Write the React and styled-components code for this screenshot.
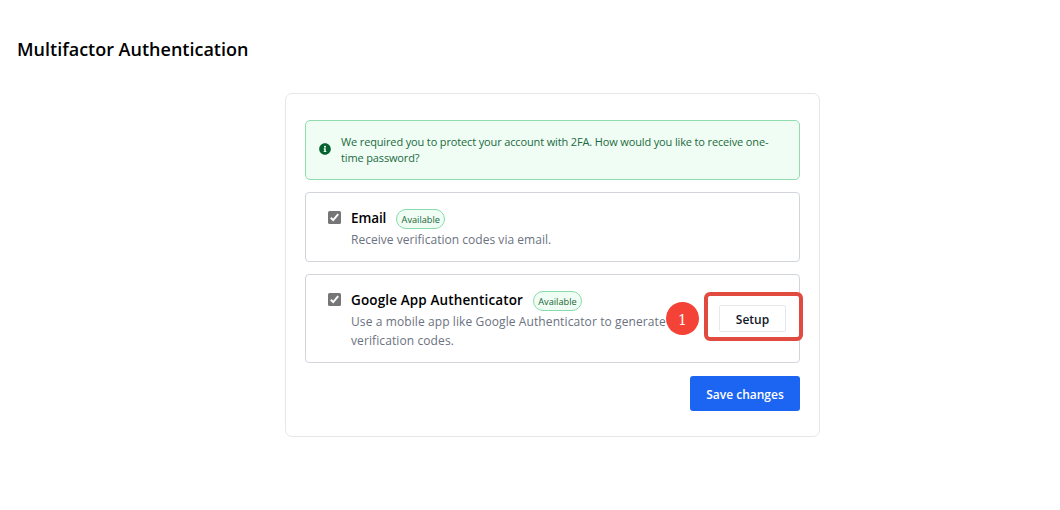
import React from 'react'
import styled, { createGlobalStyle } from 'styled-components'
import { FaInfoCircle } from 'react-icons/fa'

const methods = [
  {
    id: 'email',
    title: 'Email',
    titleSpacing: '-0.1px',
    text: 'Receive verification codes via email.',
    spacing: '0.03px',
  },
  {
    id: 'google',
    title: 'Google App Authenticator',
    titleSpacing: '0.13px',
    text: 'Use a mobile app like Google Authenticator to generate verification codes.',
    spacing: '0.1px',
    setup: true,
  },
]

const Method = ({ title, titleSpacing, text, setup, spacing }) => {
  return (
    <MethodCard>
      <Check viewBox="0 0 13 13">
        <rect width="13" height="13" rx="1.5" fill="#767676" />
        <path d="M2.8 6.7 5.2 9.1 10.2 3.2" fill="none" stroke="#fff" strokeWidth="2" />
      </Check>
      <MethodBody>
        <TitleRow>
          <MethodTitle $spacing={titleSpacing}>{title}</MethodTitle>
          <Tag>Available</Tag>
        </TitleRow>
        <MethodText $spacing={spacing}>{text}</MethodText>
      </MethodBody>
      {setup && (
        <SetupArea>
          <SetupButton>Setup</SetupButton>
          <Highlight />
          <Step>1</Step>
        </SetupArea>
      )}
    </MethodCard>
  )
}

const App = () => {
  return (
    <Page>
      <GlobalStyle />
      <Heading>Multifactor Authentication</Heading>
      <Panel>
        <Notice>
          <FaInfoCircle size={12} />
          <p>
            We required you to protect your account with 2FA. How would you like to receive one-
            <br />
            time password?
          </p>
        </Notice>
        {methods.map(method => (
          <Method key={method.id} {...method} />
        ))}
        <SaveButton>Save changes</SaveButton>
      </Panel>
    </Page>
  )
}

export default App

const GlobalStyle = createGlobalStyle`
  * {
    box-sizing: border-box;
    margin: 0;
  }
  body {
    background: #fff;
    color: #000;
    font-family: "Open Sans", "Noto Sans", sans-serif;
  }
  button {
    font-family: inherit;
    padding: 0;
    white-space: nowrap;
  }
`

const Page = styled.main`
  height: 510px;
  padding-top: 36px;
  overflow: hidden;
`

const Heading = styled.h1`
  margin-left: 17px;
  font-size: 18px;
  line-height: 26px;
  font-weight: 600;
  white-space: nowrap;
`

const Panel = styled.section`
  display: flex;
  flex-direction: column;
  gap: 12px;
  width: 535px;
  height: 344px;
  margin: 31px 0 0 285px;
  padding: 26px 19px 24px;
  border: 1px solid #e5e7eb;
  border-radius: 7px;
`

const Notice = styled.div`
  display: flex;
  flex: none;
  align-items: center;
  gap: 10px;
  height: 60px;
  padding: 0 13px;
  border: 1px solid #8fdcae;
  border-radius: 5px;
  background: #f0fdf4;
  color: #05632f;
  svg {
    flex: none;
    margin-bottom: 2px;
  }
  p {
    color: #1b6a41;
    font-size: 11px;
    line-height: 16px;
    letter-spacing: -0.14px;
    white-space: nowrap;
  }
`

const MethodCard = styled.article`
  display: flex;
  flex: none;
  padding: 16px 13px 12px 22px;
  border: 1px solid #d1d5db;
  border-radius: 4px;
`

const Check = styled.svg`
  flex: none;
  width: 13px;
  height: 13px;
  margin-top: 2px;
`

const MethodBody = styled.div`
  width: 330px;
  margin-left: 10px;
`

const TitleRow = styled.div`
  display: flex;
  align-items: center;
  gap: 10px;
  height: 20px;
`

const MethodTitle = styled.h3`
  padding-bottom: 2px;
  font-size: 13.5px;
  line-height: 18px;
  font-weight: 600;
  letter-spacing: ${({ $spacing }) => $spacing};
  white-space: nowrap;
`

const Tag = styled.span`
  width: 49px;
  height: 20px;
  border: 1px solid #86dcaa;
  border-radius: 10px;
  background: #f0fdf4;
  color: #166534;
  font-size: 9.2px;
  line-height: 19px;
  text-align: center;
`

const MethodText = styled.p`
  margin-top: 1px;
  color: #6b7280;
  font-size: 12px;
  line-height: 19px;
  letter-spacing: ${({ $spacing }) => $spacing};
`

const SetupArea = styled.div`
  position: relative;
  align-self: center;
  margin: 0 0 4px auto;
`

const SetupButton = styled.button`
  display: block;
  width: 67px;
  height: 27px;
  padding-top: 1px;
  border: 1px solid #e5e7eb;
  border-radius: 2px;
  background: #fff;
  color: #111827;
  font-size: 12px;
  font-weight: 600;
`

const Highlight = styled.span`
  position: absolute;
  inset: -13px -17px -9px -15px;
  border: 4px solid #e04a3f;
  border-radius: 6px;
`

const Step = styled.span`
  position: absolute;
  left: -53px;
  top: -3px;
  width: 33px;
  height: 33px;
  border-radius: 50%;
  background: #f44336;
  color: #fff;
  font-family: "DejaVu Serif", serif;
  font-size: 14px;
  line-height: 36px;
  text-align: center;
`

const SaveButton = styled.button`
  flex: none;
  align-self: flex-end;
  width: 110px;
  height: 35px;
  margin-top: 1px;
  padding-top: 2px;
  border: 0;
  border-radius: 3px;
  background: #1c64f2;
  color: #fff;
  font-size: 12px;
  font-weight: 600;
`
